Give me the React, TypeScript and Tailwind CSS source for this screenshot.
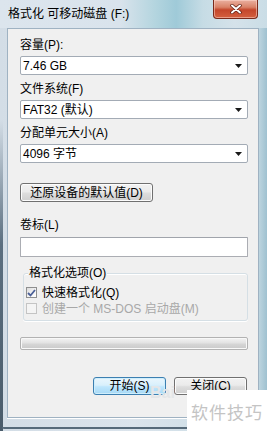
import React from "react";

function Combo({ text }: { text: string }) {
  return (
    <div className="h-[19px] border border-[#a3abb5] bg-white rounded-[2px] flex items-center justify-between pl-[2px] pr-[5px]">
      <span className="text-[12px] leading-none text-black">{text}</span>
      <svg width="7" height="4" viewBox="0 0 7 4">
        <path d="M0 0H7L3.5 4Z" fill="#1a1a1a" />
      </svg>
    </div>
  );
}

function WinButton({ label, def }: { label: string; def?: boolean }) {
  return (
    <div
      className={
        "h-[18px] w-[73px] rounded-[3px] border flex items-center justify-center text-[12px] leading-none text-black " +
        (def
          ? "border-[#3c7fb1] bg-[linear-gradient(180deg,#eaf6fd_0%,#d9f0fc_45%,#bee6fd_55%,#a7d9f5_100%)] shadow-[inset_0_0_0_1px_#cfeefc]"
          : "border-[#707070] bg-[linear-gradient(180deg,#f2f2f2_0%,#ebebeb_45%,#dddddd_55%,#cfcfcf_100%)] shadow-[inset_0_0_0_1px_#fcfcfc]")
      }
    >
      {label}
    </div>
  );
}

export default function App() {
  return (
    <div className="relative w-[267px] h-[431px] overflow-hidden bg-[linear-gradient(90deg,#d3dde6_0%,#dbe4ec_50%,#c7dbe4_96%,#9fc1d0_100%)] font-[family-name:'Liberation_Sans','Noto_Sans_CJK_SC',sans-serif]">
      {/* title bar */}
      <div className="h-[28px] flex items-start justify-between bg-[linear-gradient(90deg,#dce5ed_0%,#d9e3ec_45%,#b4d5df_58%,#9fcad8_66%,#c6dce5_76%,#d5e2ea_88%,#cadde6_100%)]">
        <div className="pl-[8px] pt-[7px] text-[12px] leading-[14px] text-black">格式化 可移动磁盘 (F:)</div>
        <div className="mr-[9px] w-[45px] h-[19px] rounded-b-[4px] border border-t-0 border-[#7a2a1b] bg-[linear-gradient(180deg,#eab0a0_0%,#d98268_40%,#c4462b_55%,#d4603f_100%)] shadow-[inset_0_0_0_1px_rgba(255,220,210,0.5)] flex items-center justify-center">
          <svg width="12" height="10" viewBox="0 0 12 10">
            <path d="M2 1.5L10 8.5M10 1.5L2 8.5" stroke="#5a1a10" strokeWidth="3.4" strokeLinecap="round" />
            <path d="M2 1.5L10 8.5M10 1.5L2 8.5" stroke="#ffffff" strokeWidth="2" strokeLinecap="round" />
          </svg>
        </div>
      </div>

      {/* client area */}
      <div className="ml-[7px] mr-[8px] h-[390px] border border-[#9fb2c2] bg-[#f0f0f0] pl-[12px] pr-[10px] flex flex-col text-black shadow-[0_1px_0_#ffffff]">
        <div className="mt-[10px] h-[12px] text-[12px] leading-[12px]">容量(P):</div>
        <div className="mt-[5px]"><Combo text="7.46 GB" /></div>
        <div className="mt-[8px] h-[12px] text-[12px] leading-[12px]">文件系统(F)</div>
        <div className="mt-[5px]"><Combo text="FAT32 (默认)" /></div>
        <div className="mt-[8px] h-[12px] text-[12px] leading-[12px]">分配单元大小(A)</div>
        <div className="mt-[5px]"><Combo text="4096 字节" /></div>

        <div className="mt-[20px] h-[19px] w-[133px] rounded-[3px] border border-[#707070] bg-[linear-gradient(180deg,#f2f2f2_0%,#ebebeb_45%,#dddddd_55%,#cfcfcf_100%)] shadow-[inset_0_0_0_1px_#fcfcfc] flex items-center justify-center text-[12px] leading-none">
          还原设备的默认值(D)
        </div>

        <div className="mt-[17px] h-[12px] text-[12px] leading-[12px]">卷标(L)</div>
        <div className="mt-[6px] h-[20px] border border-[#abadb3] border-t-[#a0a4ab] bg-white rounded-[1px]" />

        {/* group box */}
        <div className="relative mt-[16px] ml-[3px] h-[48px] rounded-[3px] border border-[#d5dfe5] shadow-[0_1px_0_#ffffff,inset_0_1px_0_#ffffff] flex flex-col pl-[2px] pt-[13px] gap-[5px]">
          <div className="absolute -top-[7px] left-[4px] bg-[#f0f0f0] px-[1px] text-[12px] leading-[12px]">格式化选项(O)</div>
          <div className="flex items-center gap-[5px] h-[11px]">
            <div className="w-[11px] h-[11px] border border-[#8e8f8f] bg-[linear-gradient(135deg,#dcdcdc_0%,#f4f4f4_60%,#ffffff_100%)] flex items-center justify-center">
              <svg width="9" height="8" viewBox="0 0 9 8">
                <path d="M1 4L3.5 6.5L8 1" stroke="#4a5f97" strokeWidth="1.8" fill="none" />
              </svg>
            </div>
            <span className="text-[12px] leading-none">快速格式化(Q)</span>
          </div>
          <div className="flex items-center gap-[5px] h-[11px]">
            <div className="w-[11px] h-[11px] border border-[#c4c4c4] bg-[#f4f4f4]" />
            <span className="text-[12px] leading-none text-[#a8a8a8]">创建一个 MS-DOS 启动盘(M)</span>
          </div>
        </div>

        {/* progress */}
        <div className="mt-[16px] h-[13px] rounded-[2px] border border-[#b2b2b2] bg-[linear-gradient(180deg,#f3f3f3_0%,#e4e4e4_40%,#d4d4d4_60%,#c9c9c9_100%)] shadow-[inset_0_0_0_1px_#f8f8f8]" />

        {/* bottom buttons */}
        <div className="mt-[27px] flex justify-end gap-[8px] pr-[1px]">
          <WinButton label="开始(S)" def />
          <WinButton label="关闭(C)" />
        </div>
      </div>

      {/* left edge desktop shadow */}
      <div className="absolute left-0 top-[120px] w-[3px] h-[311px] bg-[linear-gradient(180deg,rgba(80,100,115,0)_0%,#5b6f80_40%,#4a5c6b_100%)]" />
      {/* bottom frame dark edge */}
      <div className="absolute left-[2px] right-0 top-[427px] h-[2px] bg-[#566a7a] rounded-bl-[3px]" />

      {/* watermark */}
      <div className="absolute left-[150px] top-[385px] text-[16px] font-bold leading-none text-[#e4e6e8]">Bai</div>
      <div className="absolute right-0 bottom-0 w-[80px] h-[41px] bg-white flex items-center justify-center pt-[6px]">
        <span className="text-[17px] leading-none text-[#c4c4c4] tracking-[1px]">软件技巧</span>
      </div>
    </div>
  );
}
